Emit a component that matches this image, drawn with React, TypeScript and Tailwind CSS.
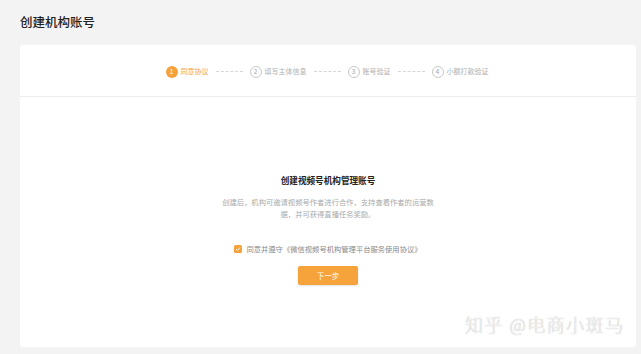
const steps = ['同意协议', '填写主体信息', '账号验证', '小额打款验证']

function StepBar() {
  return (
    <div className="flex h-[52px] items-center justify-center border-b border-[#ececec] pr-[2px] pt-[2px]">
      {steps.map((label, i) => (
        <div key={label} className="flex items-center">
          {i > 0 && (
            <div className="mx-[7px] w-[27px] border-t border-dashed border-[#d6d6d6]" />
          )}
          {i === 0 ? (
            <span className="flex h-[12px] w-[12px] items-center justify-center rounded-full bg-[#f5a23b] text-[7px] leading-none text-white">
              1
            </span>
          ) : (
            <span className="flex h-[12px] w-[12px] items-center justify-center rounded-full border border-[#c8c8c8] text-[7px] leading-none text-[#a8a8a8]">
              {i + 1}
            </span>
          )}
          <span
            className={
              'ml-[3px] text-[7px] leading-none ' +
              (i === 0 ? 'text-[#f5a23b]' : 'text-[#b0b0b0]')
            }
          >
            {label}
          </span>
        </div>
      ))}
    </div>
  )
}

export default function App() {
  return (
    <div className="relative h-[354px] w-[641px] overflow-hidden bg-[#f3f3f3] font-['Noto_Sans_CJK_SC','Noto_Sans',sans-serif]">
      <h1 className="pl-[20px] pt-[13px] text-[12.5px] font-medium leading-[18px] text-[#222]">
        创建机构账号
      </h1>
      <div className="ml-[20px] mt-[14px] h-[302px] w-[616px] rounded-[3px] bg-white">
        <StepBar />
        <div className="flex flex-col items-center pt-[77px]">
          <h2 className="text-[8.6px] font-bold leading-[12px] text-[#222]">
            创建视频号机构管理账号
          </h2>
          <p className="mt-[10px] w-[218px] text-center text-[7.3px] leading-[12px] text-[#aaa]">
            创建后，机构可邀请视频号作者进行合作，支持查看作者的运营数据，并可获得直播任务奖励。
          </p>
          <label className="mt-[24px] flex items-center">
            <span className="flex h-[8px] w-[8px] items-center justify-center rounded-[1.5px] bg-[#f5a23b]">
              <svg width="6" height="6" viewBox="0 0 6 6">
                <path d="M1 3.1 L2.5 4.5 L5 1.6" fill="none" stroke="white" strokeWidth="1" />
              </svg>
            </span>
            <span className="ml-[4px] text-[7.3px] leading-[10px] text-[#888]">
              同意并遵守《微信视频号机构管理平台服务使用协议》
            </span>
          </label>
          <button className="mt-[12px] h-[19px] w-[60px] rounded-[2px] bg-[#f6a33b] text-[7.5px] leading-none text-white shadow-[0_1px_2px_rgba(0,0,0,0.12)]">
            下一步
          </button>
        </div>
      </div>
      <div className="absolute left-[465px] top-[311px] text-[18px] font-light leading-[26px] tracking-[1.5px] text-[#f4f4f4] [text-shadow:0_0_1px_#a8a8a8]">
        知乎 @电商小斑马
      </div>
    </div>
  )
}
